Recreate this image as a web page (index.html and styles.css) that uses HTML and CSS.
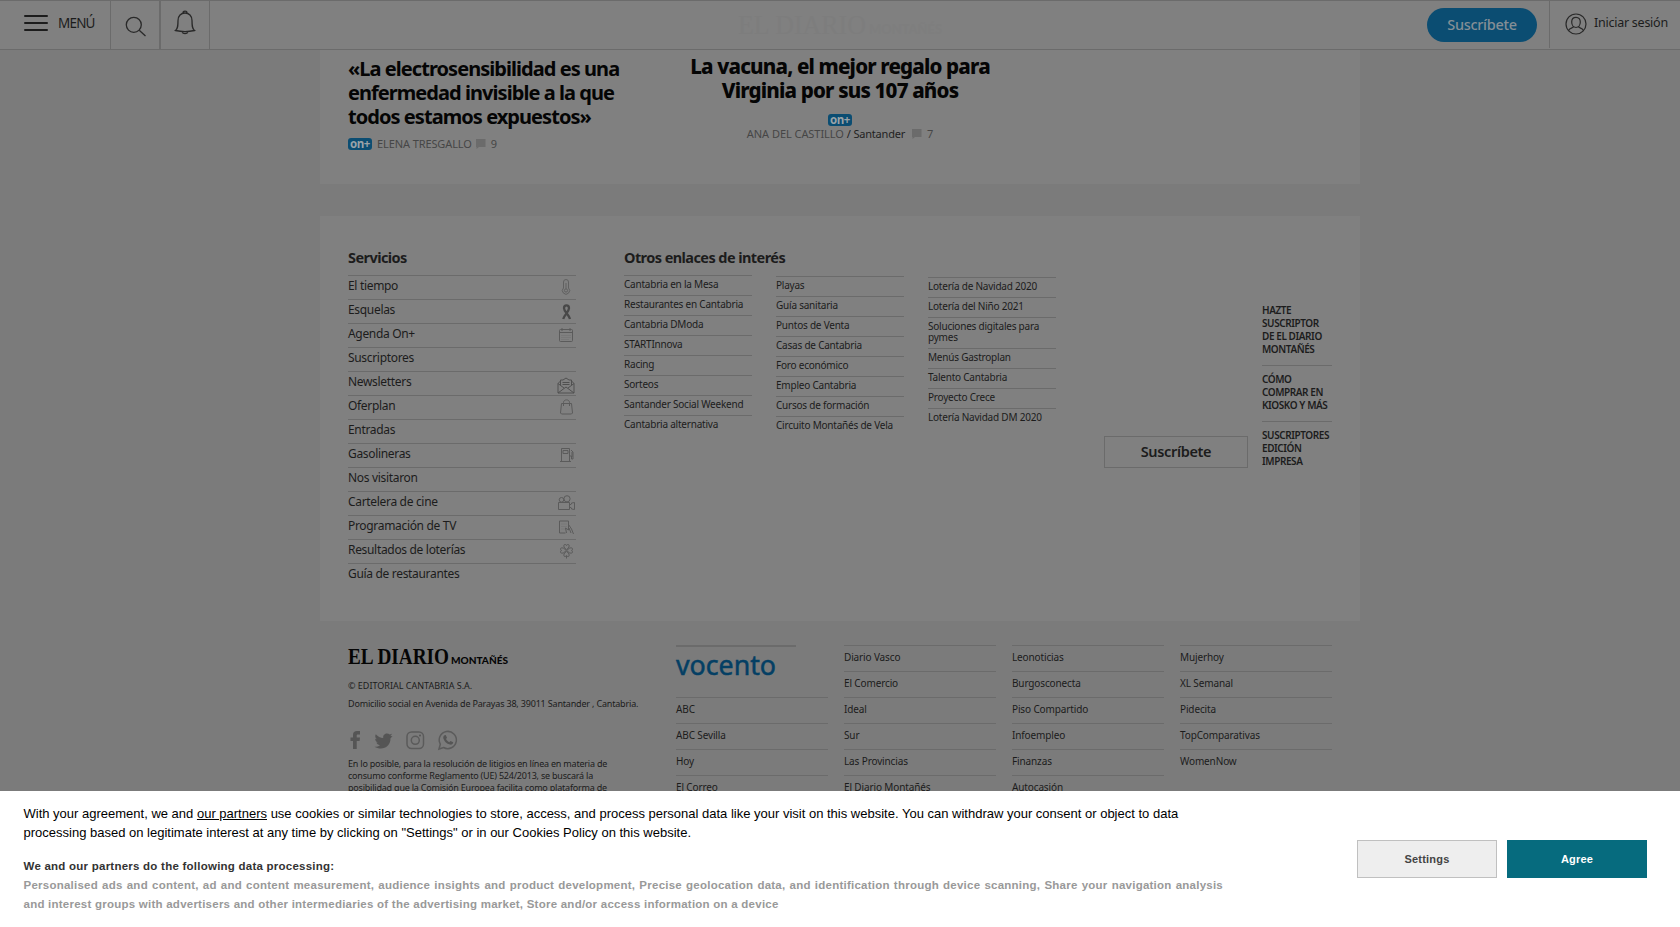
FILE: index.html
```html
<!DOCTYPE html>
<html lang="es">
<head>
<meta charset="utf-8">
<title>El Diario Montañés</title>
<link rel="stylesheet" href="styles.css">
</head>
<body>
<header class="topbar">
  <div class="menu"><span class="burger"><i></i><i></i><i></i></span><span class="menu-label">MENÚ</span></div>
  <div class="cell search"><svg width="22" height="22" viewBox="0 0 22 22"><circle cx="8.8" cy="8.8" r="7.5"/><path d="M14.2 14.2 20.5 20"/></svg></div>
  <div class="cell bell"><svg width="22" height="25" viewBox="0 0 22 25"><path d="M1.500 20.500c2.500-2 2.500-5 2.500-10C4 6 7 3 11 3s7 3 7 7.500c0 5 0 8 2.500 10-6 1.300-13 1.300-19 0zM9 3c0-2.400 4-2.400 4 0M8 21.700c1 2.600 5 2.600 6 0"/></svg></div>
  <div class="masthead"><svg width="208" height="26" viewBox="0 0 208 26"><text class="ghost-serif" x="1" y="22" textLength="128" lengthAdjust="spacingAndGlyphs">EL DIARIO</text><text class="ghost-sans" x="132" y="22" textLength="73" lengthAdjust="spacingAndGlyphs">MONTAÑÉS</text></svg></div>
  <a class="pill">Suscríbete</a>
  <div class="login"><svg width="22" height="22" viewBox="0 0 22 22"><circle cx="11" cy="11" r="10"/><path d="M11 4.300c-3 0-4.300 2-4.300 4.700 0 3.200 2 5.500 4.300 5.500s4.300-2.300 4.300-5.500c0-2.700-1.300-4.700-4.300-4.700zM8.300 13.500c0 2-4 1.300-4.600 4M13.700 13.500c0 2 4 1.300 4.600 4"/></svg><span>Iniciar sesión</span></div>
</header>

<main class="wrap">
  <section class="card news">
    <article class="story">
      <h2>«La electrosensibilidad es una<br>enfermedad invisible a la que<br>todos estamos expuestos»</h2>
      <p class="meta"><b class="on">on+</b><span class="author">ELENA TRESGALLO</span><svg class="bubble" width="10" height="10" viewBox="0 0 10 10"><path d="M0 0h9.500v8H3L.5 10V8H0z"/></svg><span class="count">9</span></p>
    </article>
    <article class="story center">
      <h2>La vacuna, el mejor regalo para<br>Virginia por sus 107 años</h2>
      <b class="on">on+</b>
      <p class="meta"><span class="author">ANA DEL CASTILLO</span><span class="place">/ Santander</span><svg class="bubble" width="10" height="10" viewBox="0 0 10 10"><path d="M0 0h9.500v8H3L.5 10V8H0z"/></svg><span class="count">7</span></p>
    </article>
  </section>

  <section class="card links">
    <div class="services">
      <h3>Servicios</h3>
      <ul>
        <li>El tiempo<svg class="ico thermo" width="18" height="16" viewBox="0 0 18 16"><path d="M6.500 9V3a2.500 2.500 0 0 1 5 0v6a3.600 3.600 0 1 1-5 0z"/><circle cx="9" cy="11.500" r="1.600"/><path d="M9 4v6"/></svg></li>
        <li>Esquelas<svg class="ico ribbon" width="18" height="16" viewBox="0 0 18 16"><path d="M6.200 15C7.500 10.500 12 7.500 12 4.300c0-3.800-5-3.800-5 0 0 3.200 4.800 6.200 6 10.700"/></svg></li>
        <li>Agenda On+<svg class="ico" width="18" height="16" viewBox="0 0 18 16"><rect x="2.500" y="2.500" width="13" height="12" rx="1"/><path d="M2.500 5.500h13M5 1v3M13 1v3"/><path class="dots" d="M4.500 8.500h9M4.500 10.500h9M4.500 12.500h7"/></svg></li>
        <li>Suscriptores</li>
        <li>Newsletters<svg class="ico i-mail" width="18" height="17" viewBox="0 0 18 17"><path d="M1 6.500v9.500h16V6.500L14.500 4V3H12L9 1 6 3H3.500v1zM1 6.500l6 4.500M17 6.500 11 11M1 16l8-6 8 6M3.500 4v4M14.500 4v4M5.500 5.500h7M5.500 7.500h7"/></svg></li>
        <li>Oferplan<svg class="ico" width="18" height="16" viewBox="0 0 18 16"><path d="M4.500 4.500h10l1 9.500-1 1h-10l-1-1zM6.500 7V3.500c0-3.500 6-3.500 6 0V7"/></svg></li>
        <li>Entradas</li>
        <li>Gasolineras<svg class="ico" width="18" height="16" viewBox="0 0 18 16"><path d="M4.500 14.500v-13h8v13M3 14.500h11M6 3.500h5v3H6zM12.500 9h2v3h1.500V5L14 3M15 5v5"/></svg></li>
        <li>Nos visitaron</li>
        <li>Cartelera de cine<svg class="ico" width="18" height="16" viewBox="0 0 18 16"><circle cx="4.500" cy="4.800" r="2.300"/><circle cx="10" cy="3.800" r="3.100"/><path d="M1.500 7.500h11v7h-11zM12.500 10l2-1V8l3-.5v7l-3-.5v-1l-2-1"/></svg></li>
        <li>Programación de TV<svg class="ico" width="18" height="16" viewBox="0 0 18 16"><path d="M8.500 14h-6V2h9v5M9.500 14l-1-5 3 2V5.500l3 4.500 2 5M12 9l2 5"/><path class="dots" d="M4.500 5h5M4.500 7.500h5M4.500 10h4"/></svg></li>
        <li>Resultados de loterías<svg class="ico" width="18" height="16" viewBox="0 0 18 16"><path d="M9.500 6.500C6.500 5 6 1.500 8 1.500c1 0 1.500.5 1.500 1 0-.5.500-1 1.500-1 2 0 1.500 3.500-1.500 5zM10 7.500c1.500-3 5.500-3.500 5.500-1.500 0 1-.5 1.500-1 1.500.5 0 1 .5 1 1.500 0 2-4 1.500-5.500-1.500zM9.500 8.500c3 1.500 3.500 5 1.500 5-1 0-1.500-.5-1.500-1 0 .5-.5 1-1.500 1-2 0-1.500-3.500 1.500-5zM9 7.500C7.500 10.500 3.500 11 3.500 9c0-1 .5-1.500 1-1.500-.5 0-1-.5-1-1.500 0-2 4-1.500 5.500 1.500zM9.500 13v2.500"/></svg></li>
        <li>Guía de restaurantes</li>
      </ul>
    </div>
    <div class="others">
      <h3>Otros enlaces de interés</h3>
      <div class="cols">
        <ul><li>Cantabria en la Mesa</li><li>Restaurantes en Cantabria</li><li>Cantabria DModa</li><li>STARTInnova</li><li>Racing</li><li>Sorteos</li><li>Santander Social Weekend</li><li>Cantabria alternativa</li></ul>
        <ul><li>Playas</li><li>Guía sanitaria</li><li>Puntos de Venta</li><li>Casas de Cantabria</li><li>Foro económico</li><li>Empleo Cantabria</li><li>Cursos de formación</li><li>Circuito Montañés de Vela</li></ul>
        <ul><li>Lotería de Navidad 2020</li><li>Lotería del Niño 2021</li><li>Soluciones digitales para<br>pymes</li><li>Menús Gastroplan</li><li>Talento Cantabria</li><li>Proyecto Crece</li><li>Lotería Navidad DM 2020</li></ul>
      </div>
    </div>
    <a class="subscribe">Suscríbete</a>
    <div class="offers">
      <p>HAZTE<br>SUSCRIPTOR<br>DE EL DIARIO<br>MONTAÑÉS</p>
      <p>CÓMO<br>COMPRAR EN<br>KIOSKO Y MÁS</p>
      <p>SUSCRIPTORES<br>EDICIÓN<br>IMPRESA</p>
    </div>
  </section>

  <footer class="foot">
    <div class="about">
      <svg class="logo" width="164" height="22" viewBox="0 0 164 22"><text class="logo-serif" x="0" y="19.500" textLength="101" lengthAdjust="spacingAndGlyphs">EL DIARIO</text><text class="logo-sans" x="103" y="19.500" textLength="57" lengthAdjust="spacingAndGlyphs">MONTAÑÉS</text></svg>
      <p class="copy">© EDITORIAL CANTABRIA S.A.</p>
      <p class="addr">Domicilio social en Avenida de Parayas 38, 39011 Santander , Cantabria.</p>
      <div class="social">
        <svg width="12" height="20" viewBox="0 0 12 20"><path class="fill" d="M4 19V11H1.500V7.500H4V5c0-3 1.500-4 4-4h3v3.500H9c-1 0-1.300.5-1.300 1.300v1.700H11L10.600 11H7.700v8z"/></svg>
        <svg width="19" height="20" viewBox="0 0 19 20"><path class="fill" d="M18.500 6.200l-2 2.100c.2 6.500-4.500 10.200-9.500 10.200-2.500 0-4.600-.6-6.500-1.800 2.200.1 4-.4 5.400-1.500-1.800-.2-3-1.200-3.500-2.600h1.700C2 12 1.200 10.500 1.200 8.800l1.700.5C1.200 8 .8 6 1.800 4.300 3.800 6.600 6.300 8 9.300 8.100 8.600 5 11 3.400 13 3.400c1.100 0 2 .4 2.700 1.200l2.400-.9-1.600 2.200z"/></svg>
        <svg width="19" height="20" viewBox="0 0 19 20"><rect x="1" y="2" width="16.500" height="16.500" rx="4.500"/><circle cx="9.300" cy="10.300" r="4"/><circle class="fill" cx="14" cy="5.500" r="1"/></svg>
        <svg width="20" height="20" viewBox="0 0 20 20"><path d="M1 19l1.300-4.800a8.600 8.600 0 1 1 3.300 3.300z"/><path class="fill" d="M6.500 5.200l1.200-.3 1.300 2.900-1 1.300c.8 1.500 1.700 2.300 3.200 3.100l1.300-1.300 2.700 1.400c0 2-1.900 2.600-3.200 2.300-3.500-.8-6-3.500-6.700-6.400-.2-1.200.3-2.300 1.200-3z"/></svg>
      </div>
      <p class="legal">En lo posible, para la resolución de litigios en línea en materia de<br>consumo conforme Reglamento (UE) 524/2013, se buscará la<br>posibilidad que la Comisión Europea facilita como plataforma de</p>
    </div>
    <div class="group">
      <div class="first">
        <div class="vocento"><svg width="104" height="30" viewBox="0 0 104 30"><text x="0" y="20" textLength="100" lengthAdjust="spacingAndGlyphs">vocento</text></svg></div>
        <ul><li>ABC</li><li>ABC Sevilla</li><li>Hoy</li><li>El Correo</li></ul>
      </div>
      <ul><li>Diario Vasco</li><li>El Comercio</li><li>Ideal</li><li>Sur</li><li>Las Provincias</li><li>El Diario Montañés</li></ul>
      <ul><li>Leonoticias</li><li>Burgosconecta</li><li>Piso Compartido</li><li>Infoempleo</li><li>Finanzas</li><li>Autocasión</li></ul>
      <ul><li>Mujerhoy</li><li>XL Semanal</li><li>Pidecita</li><li>TopComparativas</li><li>WomenNow</li></ul>
    </div>
  </footer>
</main>

<aside class="consent">
  <div class="consent-text">
    <p class="intro">With your agreement, we and <u>our partners</u> use cookies or similar technologies to store, access, and process personal data like your visit on this website. You can withdraw your consent or object to data<br>processing based on legitimate interest at any time by clicking on "Settings" or in our Cookies Policy on this website.</p>
    <p class="lead">We and our partners do the following data processing:</p>
    <p class="purposes">Personalised ads and content, ad and content measurement, audience insights and product development, Precise geolocation data, and identification through device scanning, Share your navigation analysis and interest groups with advertisers and other intermediaries of the advertising market, Store and/or access information on a device</p>
  </div>
  <div class="buttons"><button class="settings">Settings</button><button class="agree">Agree</button></div>
</aside>
</body>
</html>
```
FILE: styles.css
```css
* { box-sizing: border-box; margin: 0; padding: 0; }
html, body { height: 927px; overflow: hidden; }
body { background: #7b7b7b; font-family: "Noto Sans", sans-serif; color: #1c1c1c; display: flex; flex-direction: column; }
ul { list-style: none; }
li, p, h2, h3, a, span { white-space: nowrap; }
svg { fill: none; stroke: #292929; stroke-width: 1.3; flex: none; overflow: visible; }
svg text { stroke: none; }

/* top bar */
.topbar { height: 50px; flex: none; background: #808080; border-top: 1px solid #6b6b6b; border-bottom: 1px solid #6b6b6b; display: flex; }
.menu { width: 111px; border-right: 1px solid #6b6b6b; padding-left: 24px; display: flex; }
.burger { width: 24px; padding-top: 14px; display: flex; flex-direction: column; gap: 5px; }
.burger i { height: 2px; background: #1c1c1c; border-radius: 1px; }
.menu-label { margin-left: 10px; font-size: 13.5px; line-height: 45px; letter-spacing: -.8px; }
.cell { display: flex; justify-content: center; }
.search { width: 50px; border-right: 2px solid #6b6b6b; padding: 15px 0 0 1px; }
.bell { width: 49px; border-right: 1px solid #6b6b6b; padding-top: 9px; }
.masthead { flex: 1; padding: 11px 0 0 527px; }
.ghost-serif { font: 27px "Liberation Serif", serif; fill: #7d7d7d; }
.ghost-sans { font: bold 13px Lato, sans-serif; fill: #7e7e7e; }
.pill { width: 110px; height: 34px; margin: 7px 12px 0 0; border-radius: 17px; background: #0b4d72; color: #848f96; font-size: 14.5px; font-weight: 500; line-height: 33px; text-align: center; letter-spacing: -.3px; }
.login { width: 131px; height: 47px; border-left: 1px solid #6b6b6b; padding: 12px 0 0 15px; display: flex; }
.login svg { stroke-width: 1.2; }
.login span { margin-left: 7px; font-size: 12.5px; line-height: 19px; letter-spacing: -.25px; }

.wrap { width: 1040px; margin: 0 auto; flex: none; }
.card { background: #808080; }

/* stories */
.news { height: 134px; display: flex; padding-left: 28px; }
.story { width: 332px; padding-top: 7px; }
.story h2 { color: #050505; font-size: 20px; line-height: 24px; font-weight: 700; letter-spacing: -.95px; }
.story.center { width: 320px; padding-top: 4px; text-align: center; }
.story.center h2 { font-size: 20.5px; font-weight: 800; letter-spacing: -.82px; }
.meta { display: flex; align-items: center; height: 16px; font-size: 11px; line-height: 16px; color: #464646; letter-spacing: -.1px; }
.story > .meta { margin-top: 7px; }
.on { display: block; width: 24px; height: 12px; border-radius: 3px; background: #0b4d72; color: #9aa3a8; font: bold 11.5px/11px "Open Sans", sans-serif; text-align: center; letter-spacing: -.5px; }
.author { margin-left: 5px; }
.bubble { margin-left: 4px; fill: #6b6b6b; stroke: none; }
.count { margin-left: 5px; }
.center > .on { margin: 12px auto 0; }
.story.center .meta { margin: 0; justify-content: center; letter-spacing: -.2px; }
.center .author { margin: 0; letter-spacing: -.05px; }
.place { margin-left: 3px; color: #1f1f1f; }
.center .bubble { margin-left: 7px; }

/* link directory */
.links { height: 405px; margin-top: 32px; padding: 0 28px; display: flex; }
h3 { font-size: 14.5px; line-height: 20px; font-weight: 700; letter-spacing: -.57px; height: 28px; }
.services { width: 228px; padding-top: 31px; }
.services li { height: 24px; border-top: 1px solid #6b6b6b; font-size: 12px; line-height: 20px; letter-spacing: -.32px; display: flex; justify-content: space-between; padding-right: 1px; }
.ico { stroke: #5b5b5b; stroke-width: 1; margin-top: 3px; }
.i-mail { margin-top: 5px; stroke: #505050; }
.thermo { stroke: #606060; }
.ribbon { margin-top: 4px; stroke-width: 2.3; stroke: #484848; }
.dots { stroke-dasharray: 1 1; stroke: #707070; }
.others { margin-left: 48px; padding-top: 31px; width: 432px; }
.cols { display: grid; grid-template-columns: repeat(3, 128px); gap: 24px; }
.cols ul:nth-child(2) { padding-top: 1px; }
.cols ul:nth-child(3) { padding-top: 2px; }
.cols li { border-top: 1px solid #6b6b6b; padding: 3px 0 5px; font-size: 10px; line-height: 11px; letter-spacing: -.22px; }
.subscribe { width: 144px; height: 32px; margin: 220px 0 0 48px; border: 1px solid #6b6b6b; font-size: 14.5px; font-weight: 600; line-height: 28px; text-align: center; letter-spacing: -.35px; }
.offers { width: 70px; margin-left: 14px; padding-top: 88px; }
.offers p { font-size: 10px; line-height: 13px; font-weight: 600; letter-spacing: -.42px; padding-bottom: 9px; }
.offers p + p { border-top: 1px solid #6b6b6b; padding-top: 7px; }

/* footer */
.foot { display: flex; padding: 24px 28px 0; }
.about { width: 328px; font-size: 9px; }
.logo { display: block; margin-top: -1px; }
.logo-serif { font: bold 23.5px "Liberation Serif", serif; fill: #050505; }
.logo-sans { font: 900 10px Lato, sans-serif; fill: #050505; }
.copy { margin-top: 11px; line-height: 18px; letter-spacing: 0; }
.addr { line-height: 18px; letter-spacing: -.18px; }
.social { display: flex; margin: 17px 0 0 1px; height: 20px; }
.social svg { stroke: #5b5b5b; stroke-width: 1.5; }
.social svg + svg { margin-left: 13px; }
.social .fill { fill: #555; stroke: none; }
.legal { margin-top: 8px; line-height: 12px; letter-spacing: -.21px; }
.group { display: grid; grid-template-columns: repeat(4, 152px); gap: 16px; }
.group li { height: 26px; border-top: 1px solid #6b6b6b; font-size: 10px; line-height: 23px; letter-spacing: -.13px; }
.vocento { height: 52px; width: 120px; border-top: 2px solid #6b6b6b; padding-top: 8px; }
.vocento text { font: 27px "Noto Sans", sans-serif; fill: #043f64; stroke: #043f64; stroke-width: .5px; }

/* consent banner, laid over the page */
.consent { position: fixed; left: 0; right: 0; bottom: 0; height: 136px; background: #fff; font-family: "Liberation Sans", Arial, sans-serif; display: flex; justify-content: space-between; padding: 13px 33px 0 23.5px; }
.consent-text { width: 1199.5px; line-height: 19px; }
.intro { font-size: 13px; color: #000; }
.lead { margin-top: 15px; font-size: 11.5px; font-weight: 700; color: #333; letter-spacing: .24px; }
.purposes { white-space: normal; font-size: 11.5px; font-weight: 700; color: #999; text-align: justify; letter-spacing: .24px; }
.buttons { display: flex; gap: 10px; padding-top: 36px; }
.buttons button { width: 140px; height: 38px; font: bold 11px "Liberation Sans", Arial, sans-serif; letter-spacing: .2px; }
.settings { background: #eee; border: 1px solid #c0c0c0; color: #444; }
.agree { background: #066b7e; border: 0; color: #fff; }
```
